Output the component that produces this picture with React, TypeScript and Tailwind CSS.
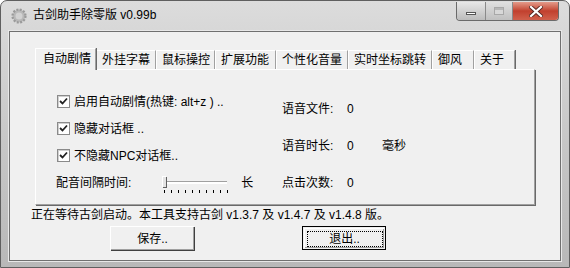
import React from "react";

const FONT = { fontFamily: '"Liberation Sans", "Noto Sans CJK SC", sans-serif' };

const TABS = [
  { label: "自动剧情", w: "w-[61px]" },
  { label: "外挂字幕", w: "w-[60px]" },
  { label: "鼠标操控", w: "w-[59px]" },
  { label: "扩展功能", w: "w-[61px]" },
  { label: "个性化音量", w: "w-[72px]" },
  { label: "实时坐标跳转", w: "w-[84px]" },
  { label: "御风", w: "w-[42px]" },
  { label: "关于", w: "w-[41px]" },
];

function Check({ label }: { label: string }) {
  return (
    <div className="flex h-[13px] items-center">
      <span className="flex h-[13px] w-[13px] shrink-0 items-center justify-center border border-[#8a8a8a] bg-white shadow-[inset_1px_1px_0_#d0d0d0]">
        <svg width="9" height="9" viewBox="0 0 9 9">
          <path d="M1 4 L3.5 6.5 L8 1.5" stroke="#222" strokeWidth="1.8" fill="none" />
        </svg>
      </span>
      <span className="ml-[4px] whitespace-pre text-[12px] leading-none text-black">{label}</span>
    </div>
  );
}

export default function App() {
  return (
    <div className="h-[268px] w-[570px] bg-white" style={FONT}>
      <div className="flex h-full flex-col rounded-t-[7px] border border-[#5f5f5f] bg-gradient-to-b from-[#dcdcdc] via-[#c8c8c8] to-[#b8b8b8]">
        {/* title bar */}
        <div className="flex h-[29px] shrink-0 items-start">
          <div className="mt-[7px] ml-[10px] flex h-[16px] w-[16px] items-center justify-center">
            <svg width="16" height="16" viewBox="0 0 16 16">
              <circle cx="8" cy="8" r="6.5" fill="#b8b8b8" stroke="#9a9a9a" strokeDasharray="2 1.4" strokeWidth="2.2" />
              <circle cx="8" cy="8" r="3.5" fill="#d2d2d2" />
            </svg>
          </div>
          <span className="mt-[8px] ml-[6px] text-[12px] leading-none text-black">古剑助手除零版 v0.99b</span>
          <div className="ml-auto mr-[10px] mt-[1px] flex h-[19px] overflow-hidden rounded-b-[4px] border border-t-0 border-[#6a6a6a]">
            <div className="flex w-[29px] items-center justify-center border-r border-[#8a8a8a] bg-gradient-to-b from-[#e8e8e8] to-[#bcbcbc]">
              <span className="mt-[5px] h-[3px] w-[10px] border border-[#555] bg-white" />
            </div>
            <div className="flex w-[27px] items-center justify-center border-r border-[#8a8a8a] bg-gradient-to-b from-[#e0e0e0] to-[#c0c0c0]">
              <span className="h-[8px] w-[10px] border border-[#a8a8a8] bg-[#d8d8d8] shadow-[inset_0_2px_0_#b8b8b8]" />
            </div>
            <div className="flex w-[45px] items-center justify-center bg-gradient-to-b from-[#e39a8a] via-[#c1402e] to-[#d0604c]">
              <svg width="14" height="11" viewBox="0 0 14 11">
                <path d="M2 1 L12 10 M12 1 L2 10" stroke="#5a2a24" strokeWidth="4" strokeLinecap="square" />
                <path d="M2 1 L12 10 M12 1 L2 10" stroke="#fff" strokeWidth="2.2" strokeLinecap="square" />
              </svg>
            </div>
          </div>
        </div>

        {/* client area */}
        <div className="mx-[7px] mb-[5px] flex-1 border border-[#e8e8e8]">
          <div className="flex h-full flex-col border border-[#707070] bg-[#f0f0f0]">
            {/* tab strip */}
            <div className="ml-[25px] mt-[15px] flex h-[22px] items-end">
              {TABS.map((t, i) =>
                i === 0 ? (
                  <div
                    key={t.label}
                    className={`relative z-10 -mb-px h-[22px] ${t.w} border-l border-t border-white bg-[#f0f0f0] pl-[7px] pt-[4px] text-[12px] leading-none shadow-[1px_0_0_#696969] [border-right:1px_solid_#a0a0a0]`}
                  >
                    {t.label}
                  </div>
                ) : (
                  <div
                    key={t.label}
                    className={`h-[19px] ${t.w} border-l border-t border-white pl-[5px] pt-[3px] text-[12px] leading-none shadow-[1px_0_0_#696969] [border-right:1px_solid_#a0a0a0]`}
                  >
                    {t.label}
                  </div>
                )
              )}
            </div>

            {/* panel */}
            <div className="ml-[25px] flex h-[136px] w-[500px] border-l border-t border-white shadow-[1px_1px_0_#696969] [border-bottom:1px_solid_#a0a0a0] [border-right:1px_solid_#a0a0a0]">
              <div className="flex w-[224px] flex-col gap-[14px] pl-[21px] pt-[25px]">
                <Check label="启用自动剧情(热键: alt+z ) .." />
                <Check label="隐藏对话框 .." />
                <Check label="不隐藏NPC对话框.." />
                <div className="flex h-[13px] items-center">
                  <span className="-ml-px text-[12px] leading-none">配音间隔时间:</span>
                  <div className="relative ml-[31px] h-[13px] w-[66px]">
                    <div className="absolute left-[1px] top-[5px] h-[3px] w-[64px] border-l border-t border-[#a0a0a0] bg-white [border-bottom:1px_solid_#fff]" />
                    <div className="absolute left-0 top-0 h-[11px] w-[4px] border-l border-t border-white bg-[#e4e4e4] shadow-[1px_1px_0_#606060]" />
                    <div className="absolute left-[2px] top-[14px] flex gap-[6px]">
                      {Array.from({ length: 10 }).map((_, i) => (
                        <span key={i} className="h-[3px] w-px bg-black" />
                      ))}
                    </div>
                  </div>
                  <span className="ml-[13px] text-[12px] leading-none">长</span>
                </div>
              </div>
              <div className="flex flex-col gap-[21px] pl-[22px] pt-[31px] text-[12px] leading-none">
                <div className="flex h-[16px] items-center">
                  <span className="w-[65px]">语音文件:</span>
                  <span>0</span>
                </div>
                <div className="flex h-[16px] items-center">
                  <span className="w-[65px]">语音时长:</span>
                  <span className="w-[35px]">0</span>
                  <span>毫秒</span>
                </div>
                <div className="flex h-[16px] items-center">
                  <span className="w-[65px]">点击次数:</span>
                  <span>0</span>
                </div>
              </div>
            </div>

            {/* status */}
            <div className="ml-[21px] mt-[3px] h-[14px] text-[12px] leading-[14px] text-black">
              正在等待古剑启动。本工具支持古剑 v1.3.7 及 v1.4.7 及 v1.4.8 版。
            </div>

            {/* buttons */}
            <div className="mt-[4px] flex">
              <button className="ml-[100px] h-[24px] w-[84px] border-l border-t border-white bg-[#f0f0f0] text-[12px] leading-none shadow-[1px_1px_0_#404040,inset_-1px_-1px_0_#a0a0a0]">
                保存..
              </button>
              <button className="ml-[108px] flex h-[24px] w-[84px] items-center justify-center border border-black bg-[#f0f0f0] text-[12px] leading-none">
                <span className="flex h-[20px] w-[80px] items-center justify-center border-l border-t border-white shadow-[inset_-1px_-1px_0_#a0a0a0]">
                  <span className="flex h-[16px] w-[76px] items-center justify-center border border-dotted border-black">退出..</span>
                </span>
              </button>
            </div>
          </div>
        </div>
      </div>
    </div>
  );
}
